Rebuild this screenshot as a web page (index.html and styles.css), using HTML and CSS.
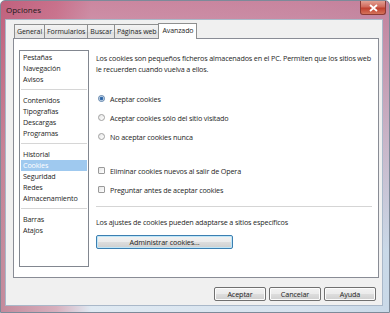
FILE: index.html
```html
<!DOCTYPE html>
<html lang="es">
<head>
    <meta charset="UTF-8">
    <title>Opciones</title>
    <link rel="stylesheet" href="styles.css">
</head>
<body>

<div class="window">
    <div class="titlebar">
        <span class="title">Opciones</span>
        <span class="close">
            <svg width="9" height="8" viewBox="0 0 9 8"><path d="M1 1 L8 7 M8 1 L1 7" stroke="#fff" stroke-width="1.8"/></svg>
        </span>
    </div>

    <div class="client">
        <div class="tabs">
            <div class="tab">General</div>
            <div class="tab">Formularios</div>
            <div class="tab">Buscar</div>
            <div class="tab">Páginas web</div>
            <div class="tab active">Avanzado</div>
        </div>

        <div class="panel">
            <ul class="list">
                <li>Pestañas</li>
                <li>Navegación</li>
                <li>Avisos</li>
                <li class="sep"></li>
                <li>Contenidos</li>
                <li>Tipografías</li>
                <li>Descargas</li>
                <li>Programas</li>
                <li class="sep"></li>
                <li>Historial</li>
                <li class="selected">Cookies</li>
                <li>Seguridad</li>
                <li>Redes</li>
                <li>Almacenamiento</li>
                <li class="sep"></li>
                <li>Barras</li>
                <li>Atajos</li>
            </ul>

            <div class="content">
                <p class="intro">Los cookies son pequeños ficheros almacenados en el PC. Permiten que los sitios web le recuerden cuando vuelva a ellos.</p>

                <div class="options radios">
                    <label class="option"><span class="radio checked"></span>Aceptar cookies</label>
                    <label class="option"><span class="radio"></span>Aceptar cookies sólo del sitio visitado</label>
                    <label class="option"><span class="radio"></span>No aceptar cookies nunca</label>
                </div>

                <div class="options checks">
                    <label class="option"><span class="check"></span>Eliminar cookies nuevos al salir de Opera</label>
                    <label class="option"><span class="check"></span>Preguntar antes de aceptar cookies</label>
                </div>

                <hr class="divider">

                <p class="note">Los ajustes de cookies pueden adaptarse a sitios específicos</p>
                <button type="button" class="button wide">Administrar cookies...</button>
            </div>
        </div>

        <div class="footer">
            <button type="button" class="button">Aceptar</button>
            <button type="button" class="button">Cancelar</button>
            <button type="button" class="button">Ayuda</button>
        </div>
    </div>
</div>

</body>
</html>
```

FILE: styles.css
```css
html, body {
    margin: 0;
    padding: 0;
    background: #ffffff;
}
body {
    font-family: "Open Sans", "Noto Sans", sans-serif;
    font-size: 7.2px;
    letter-spacing: -0.15px;
    color: #1e1e1e;
}
.window {
    width: 390px;
    height: 313px;
    box-sizing: border-box;
    display: flex;
    flex-direction: column;
    border: 1px solid #7d8a99;
    border-radius: 5px 5px 0 0;
    background:
        linear-gradient(to bottom, rgba(190, 70, 105, 0.6) 0, rgba(200, 110, 135, 0.3) 150px, rgba(160, 180, 200, 0) 250px),
        linear-gradient(to right, #c48a9c 0, #d7afbd 55px, #dfe9f2 90px, #d6e2ee 300px, #c9d9e8 100%);
}
.titlebar {
    height: 18px;
    display: flex;
    align-items: center;
    justify-content: space-between;
    padding: 0 3px 2px 5px;
    box-sizing: border-box;
}
.title {
    font-size: 8px;
    letter-spacing: 0;
    color: #1a1a1a;
}
.close {
    width: 24px;
    height: 13px;
    margin-top: -2px;
    display: flex;
    align-items: center;
    justify-content: center;
    border: 1px solid #8b3a34;
    border-top: none;
    border-radius: 0 0 3px 3px;
    background: linear-gradient(to bottom, #e3a093 0, #d06a5c 45%, #c0402f 55%, #d4735a 100%);
}
.client {
    flex: 1;
    margin: 0 6px 6px 4px;
    background: #f0f0f0;
    border: 1px solid #a9b8c9;
    display: flex;
    flex-direction: column;
    padding: 2px 2px 0 7px;
}
.tabs {
    display: flex;
    align-items: flex-end;
    height: 16px;
    padding-left: 1px;
    position: relative;
    z-index: 1;
}
.tab {
    height: 13px;
    line-height: 13px;
    padding: 0 2px;
    font-size: 7px;
    letter-spacing: -0.1px;
    border: 1px solid #8e8f8f;
    border-bottom: none;
    margin-right: -1px;
    background: linear-gradient(to bottom, #f3f3f3 0, #ebebeb 50%, #dedede 51%, #e6e6e6 100%);
}
.tab.active {
    height: 15px;
    line-height: 14px;
    background: #ffffff;
    margin-bottom: -1px;
    padding: 0 3px;
}
.panel {
    height: 240px;
    box-sizing: border-box;
    margin-right: 1px;
    background: #ffffff;
    border: 1px solid #898c95;
    display: flex;
    padding: 11px 0 0 5px;
}
.list {
    list-style: none;
    margin: 0;
    padding: 1px 1px;
    width: 70px;
    height: 217px;
    box-sizing: border-box;
    border: 1px solid #828790;
}
.list li {
    height: 11px;
    line-height: 11px;
    padding-left: 2px;
    white-space: nowrap;
}
.list li.sep {
    height: 1px;
    margin: 4px 0 5px;
    background: #d6d6d6;
}
.list li.selected {
    background: #9fc9ef;
    color: #ffffff;
}
.content {
    flex: 1;
    padding: 3px 6px 0 7px;
}
.intro {
    margin: 0;
    line-height: 11px;
}
.options {
    display: flex;
    flex-direction: column;
    gap: 8px;
}
.radios {
    margin-top: 18px;
}
.checks {
    margin-top: 23px;
}
.option {
    display: flex;
    align-items: center;
    height: 11px;
    padding-left: 2px;
}
.radio, .check {
    width: 7px;
    height: 7px;
    box-sizing: border-box;
    margin-right: 5px;
    border: 1px solid #a0a0a0;
    background: linear-gradient(135deg, #e6e6e6, #ffffff);
}
.radio {
    border-radius: 50%;
}
.radio.checked {
    border-color: #5a7fa8;
    background: radial-gradient(circle, #2d5f9c 0, #3e78b8 1.6px, #dbe6f2 2.2px);
}
.check {
    border-radius: 1px;
    border-color: #9a9a9a;
}
.divider {
    margin: 11px 0 0 0;
    border: none;
    height: 1px;
    background: #d5d5d5;
}
.note {
    margin: 10px 0 0 0;
    line-height: 11px;
}
.button {
    font-family: inherit;
    font-size: 7.2px;
    letter-spacing: -0.1px;
    color: #1e1e1e;
    height: 14px;
    padding: 0;
    border: 1px solid #707070;
    border-radius: 2px;
    background: linear-gradient(to bottom, #f2f2f2 0, #ebebeb 50%, #dddddd 51%, #cfcfcf 100%);
    box-shadow: inset 0 0 0 1px #fcfcfc;
}
.button.wide {
    display: block;
    width: 137px;
    margin-top: 7px;
    border-color: #3c7fb1;
    box-shadow: inset 0 0 0 1px #bfe6f8;
}
.footer {
    display: flex;
    justify-content: flex-end;
    gap: 3px;
    padding: 9px 4px 0 0;
}
.footer .button {
    width: 52px;
}
```
